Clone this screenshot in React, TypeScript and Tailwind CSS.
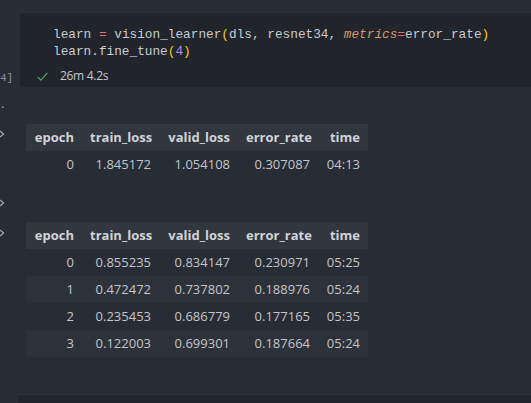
import React from "react";

const mono = { fontFamily: '"Liberation Mono", "DejaVu Sans Mono", monospace' };

const t1 = [["0", "1.845172", "1.054108", "0.307087", "04:13"]];
const t2 = [
  ["0", "0.855235", "0.834147", "0.230971", "05:25"],
  ["1", "0.472472", "0.737802", "0.188976", "05:24"],
  ["2", "0.235453", "0.686779", "0.177165", "05:35"],
  ["3", "0.122003", "0.699301", "0.187664", "05:24"],
];
const heads = ["epoch", "train_loss", "valid_loss", "error_rate", "time"];
const widths = ["w-[56px]", "w-[77px]", "w-[79px]", "w-[80px]", "w-[50px]"];

function Chevron() {
  return (
    <svg width="6" height="8" viewBox="0 0 6 8">
      <polyline points="0,1 3.5,4 0,7" fill="none" stroke="#a0a5ab" strokeWidth="1.3" />
    </svg>
  );
}

function Table({ rows }: { rows: string[][] }) {
  return (
    <div className="w-[342px] flex flex-col">
      <div className="flex h-[27px] items-center bg-[#32363e]">
        {heads.map((h, i) => (
          <div key={h} className={`${widths[i]} px-[8px] text-right font-bold text-[#d0d3d8]`}>
            {h}
          </div>
        ))}
      </div>
      {rows.map((r, ri) => (
        <div
          key={ri}
          className={`flex h-[27px] items-center ${ri % 2 === 1 ? "bg-[#2d3139]" : ""}`}
        >
          {r.map((c, i) => (
            <div key={i} className={`${widths[i]} px-[8px] text-right text-[#c3c6cb]`}>
              {c}
            </div>
          ))}
        </div>
      ))}
    </div>
  );
}

export default function App() {
  return (
    <div
      className="w-[531px] h-[403px] overflow-hidden bg-[#282c34] text-[13px]"
      style={{ fontFamily: '"Open Sans", "Noto Sans", sans-serif' }}
    >
      <div className="h-[13px]" />
      {/* code cell */}
      <div className="flex h-[74px]">
        <div className="w-[20px] flex flex-col justify-end pb-[2px]">
          <span className="text-[11px] text-[#8a8e95] leading-[14px]" style={mono}>
            4]
          </span>
        </div>
        <div className="flex-1 bg-[#21252b] flex flex-col">
          <div className="pl-[33px] pt-[13px] text-[12.75px] leading-[17px] text-[#c8ccd2]" style={mono}>
            <div className="whitespace-pre">
              learn <span className="text-[#e06c75]">=</span> vision_learner
              <span className="text-[#f5d000]">(</span>dls, resnet34,{" "}
              <span className="italic text-[#d19a66]">metrics</span>
              <span className="text-[#e06c75]">=</span>error_rate
              <span className="text-[#f5d000]">)</span>
            </div>
            <div className="whitespace-pre">
              learn.fine_tune<span className="text-[#f5d000]">(</span>
              <span className="text-[#b88ce6]">4</span>
              <span className="text-[#f5d000]">)</span>
            </div>
          </div>
          <div className="flex items-center pl-[16px] mt-[8px] h-[16px]">
            <svg width="13" height="13" viewBox="0 0 16 16" className="mr-[11px]">
              <polyline
                points="2,8.5 6,12.5 14,3.5"
                fill="none"
                stroke="#56a86a"
                strokeWidth="1.4"
              />
            </svg>
            <span className="text-[12px] text-[#c6c9ce] tracking-[-0.3px]">26m 4.2s</span>
          </div>
        </div>
      </div>
      {/* outputs */}
      <div className="flex h-[37px]">
        <div className="w-[26px] pt-[11px] pl-[1px] text-[#9aa0a6] leading-[10px]">.</div>
      </div>
      <div className="flex">
        <div className="w-[26px] pt-[6px]">
          <Chevron />
        </div>
        <Table rows={t1} />
      </div>
      <div className="flex h-[44px]">
        <div className="w-[26px] pt-[21px]">
          <Chevron />
        </div>
      </div>
      <div className="flex">
        <div className="w-[26px] pt-[7px]">
          <Chevron />
        </div>
        <Table rows={t2} />
      </div>
      <div className="h-[37px]" />
      <div className="ml-[18px] h-[10px] bg-[#21252b] border-t border-[#30343b]" />
    </div>
  );
}
